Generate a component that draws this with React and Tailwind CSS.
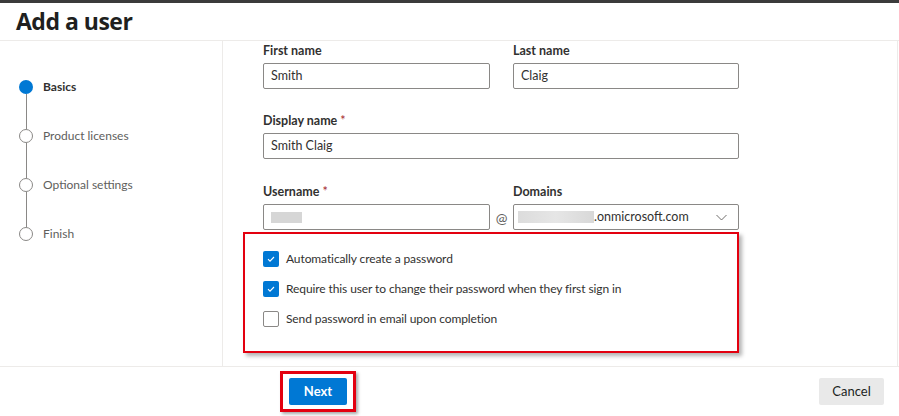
import React from 'react';

const steps = [
  { label: 'Basics', active: true },
  { label: 'Product licenses' },
  { label: 'Optional settings' },
  { label: 'Finish' },
];

function Field({ label, required, value, className = '', children }) {
  return (
    <div className={className}>
      <div className="h-[18px] text-[12.5px] font-bold leading-[18px] text-[#323130]">
        {label}
        {required && <span className="ml-[3px] font-normal text-[#a4262c]">*</span>}
      </div>
      <div className="mt-[3px] flex h-[26px] items-center rounded-[2px] border border-[#8a8886] px-[7px] text-[12.5px] text-[#323130]">
        {children || value}
      </div>
    </div>
  );
}

function Check({ checked, label }) {
  return (
    <label className="flex h-[16px] items-center gap-[7px] text-[12px] tracking-[-0.1px] text-[#323130]">
      {checked ? (
        <span className="flex h-[16px] w-[16px] items-center justify-center rounded-[2px] bg-[#0078d4]">
          <svg width="10" height="10" viewBox="0 0 10 10" fill="none">
            <path d="M2 5.2 L4 7.2 L8 3" stroke="white" strokeWidth="1.1" />
          </svg>
        </span>
      ) : (
        <span className="h-[16px] w-[16px] rounded-[2px] border border-[#8a8886] bg-white" />
      )}
      {label}
    </label>
  );
}

export default function App() {
  return (
    <div className="relative h-[416px] w-[899px] overflow-hidden bg-white font-['Lato',sans-serif]">
      <div className="h-[3px] bg-[#3b3b3b]" />
      {/* Header */}
      <div className="flex h-[38px] items-center border-b border-[#edebe9] px-[16px]">
        <h1 className="font-['Open_Sans',sans-serif] text-[23px] font-bold leading-none tracking-[-0.5px] text-[#201f1e]">Add a user</h1>
      </div>

      <div className="mr-[1px] flex h-[325px] border-r border-[#edebe9]">
        {/* Steps */}
        <aside className="w-[223px] shrink-0 border-r border-[#edebe9] pl-[19px] pt-[39px]">
          {steps.map((s, i) => (
            <div key={s.label}>
              <div className="flex h-[14px] items-center">
                {s.active ? (
                  <span className="h-[14px] w-[14px] rounded-full bg-[#0078d4]" />
                ) : (
                  <span className="h-[14px] w-[14px] rounded-full border border-[#8a8886] bg-white" />
                )}
                <span
                  className={
                    'ml-[10px] text-[12px] ' +
                    (s.active ? 'font-bold text-[#323130]' : 'text-[#605e5c]')
                  }
                >
                  {s.label}
                </span>
              </div>
              {i < steps.length - 1 && <div className="ml-[6.5px] h-[35px] w-[1px] bg-[#8a8886]" />}
            </div>
          ))}
        </aside>

        {/* Form */}
        <main className="flex-1 pt-[1px]">
          <div className="flex pl-[40px]">
            <Field label="First name" value="Smith" className="w-[227px]" />
            <Field label="Last name" value="Claig" className="ml-[23px] w-[226px]" />
          </div>
          <div className="mt-[23px] pl-[40px]">
            <Field label="Display name" required value="Smith Claig" className="w-[476px]" />
          </div>
          <div className="mt-[24px] flex items-end pl-[40px]">
            <Field label="Username" required className="w-[227px]">
              <span className="h-[11px] w-[31px] bg-[#d6d6d6]" />
            </Field>
            <span className="flex h-[26px] w-[23px] items-center justify-center text-[14px] text-[#605e5c]">@</span>
            <Field label="Domains" className="w-[226px]">
              <div className="flex w-full items-center">
                <span className="-ml-[3px] h-[12px] w-[76px] bg-gradient-to-r from-[#dcdcdc] via-[#e6e6e6] to-[#d8d8d8]" />
                <span>.onmicrosoft.com</span>
                <svg className="ml-auto mr-[4px]" width="11" height="7" viewBox="0 0 11 7" fill="none">
                  <path d="M0.5 1 L5.5 6 L10.5 1" stroke="#605e5c" strokeWidth="0.9" />
                </svg>
              </div>
            </Field>
          </div>

          {/* Password options (highlighted) */}
          <div className="ml-[20px] mt-[2px] flex h-[121px] w-[496px] flex-col gap-[14px] border-2 border-[#e3000f] pl-[18px] pt-[17px] shadow-[3px_3px_4px_rgba(0,0,0,0.3)]">
            <Check checked label="Automatically create a password" />
            <Check checked label="Require this user to change their password when they first sign in" />
            <Check label="Send password in email upon completion" />
          </div>
        </main>
      </div>

      {/* Footer */}
      <div className="flex h-[50px] items-center border-t border-[#edebe9] pl-[280px] pr-[15px]">
        <div className="flex h-[41px] w-[76px] items-center justify-center border-[3px] border-[#e3000f] shadow-[2px_2px_3px_rgba(0,0,0,0.35)]">
          <button className="h-[27px] w-[58px] rounded-[2px] bg-[#0078d4] text-[13px] font-bold text-white">
            Next
          </button>
        </div>
        <button className="ml-auto h-[27px] w-[65px] rounded-[2px] bg-[#e9e9e9] text-[13px] text-[#201f1e]">
          Cancel
        </button>
      </div>
    </div>
  );
}
